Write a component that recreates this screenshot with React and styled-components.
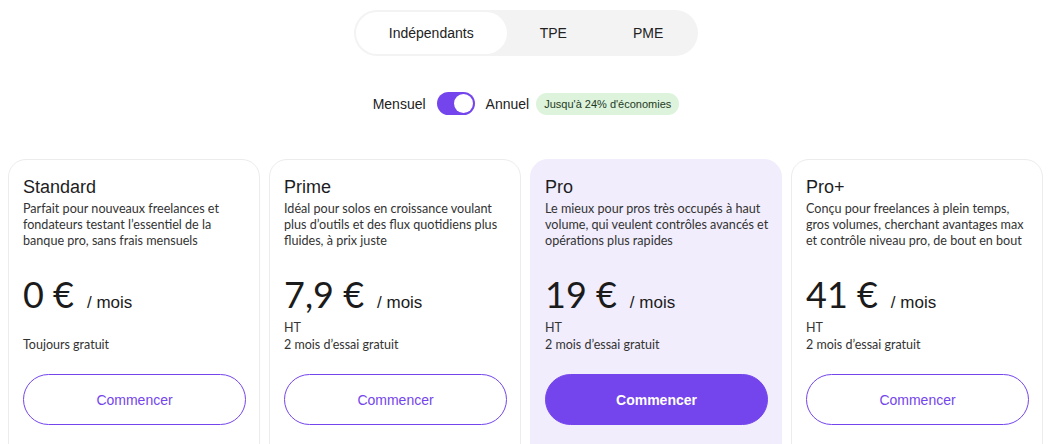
import React, { useState } from 'react';
import styled, { createGlobalStyle, css } from 'styled-components';

const purple = '#7445ec';

const GlobalStyle = createGlobalStyle`
  body {
    margin: 8px;
    background: #ffffff;
    font-family: "Liberation Sans", Arial, sans-serif;
    color: #1d1d1f;
  }
`;

// line breaks kept as in the design
const plans = [
  {
    name: 'Standard',
    text: 'Parfait pour nouveaux freelances et\nfondateurs testant l’essentiel de la\nbanque pro, sans frais mensuels',
    price: '0 €',
    notes: ['\u00a0', 'Toujours gratuit'],
  },
  {
    name: 'Prime',
    text: 'Idéal pour solos en croissance voulant\nplus d’outils et des flux quotidiens plus\nfluides, à prix juste',
    price: '7,9 €',
    notes: ['HT', '2 mois d’essai gratuit'],
  },
  {
    name: 'Pro',
    text: 'Le mieux pour pros très occupés à haut\nvolume, qui veulent contrôles avancés et\nopérations plus rapides',
    price: '19 €',
    notes: ['HT', '2 mois d’essai gratuit'],
    featured: true,
  },
  {
    name: 'Pro+',
    text: 'Conçu pour freelances à plein temps,\ngros volumes, cherchant avantages max\net contrôle niveau pro, de bout en bout',
    price: '41 €',
    notes: ['HT', '2 mois d’essai gratuit'],
  },
];

const Page = styled.div`
  display: flex;
  flex-direction: column;
  align-items: center;
  padding-top: 2px;
`;

const Tabs = styled.div`
  display: flex;
  padding: 2px;
  margin-right: 6px;
  background: #f3f3f3;
  border-radius: 23px;
`;

const Tab = styled.button`
  height: 42px;
  padding: 0 33px;
  border: none;
  border-radius: 21px;
  background: transparent;
  font-family: "Liberation Sans", Arial, sans-serif;
  font-size: 14px;
  color: #222;
  cursor: pointer;
  ${p => p.active && css`
    background: #ffffff;
  `}
`;

const BillingRow = styled.div`
  display: flex;
  align-items: center;
  gap: 11px;
  margin-top: 36px;
  margin-right: 6px;
  font-size: 14px;
  color: #222;
`;

const Switch = styled.button`
  position: relative;
  width: 38px;
  height: 23px;
  border: none;
  border-radius: 12px;
  background: ${p => (p.on ? purple : '#d4d4d8')};
  cursor: pointer;
  padding: 0;

  &::after {
    content: '';
    position: absolute;
    top: 2px;
    left: ${p => (p.on ? '17px' : '2px')};
    width: 19px;
    height: 19px;
    border-radius: 50%;
    background: #fff;
  }
`;

const Badge = styled.span`
  display: inline-flex;
  align-items: center;
  height: 22px;
  padding: 0 8px;
  margin-left: -4px;
  border-radius: 11px;
  background: #ddf3dc;
  color: #1f3a1f;
  font-size: 11px;
`;

const Grid = styled.div`
  align-self: stretch;
  display: grid;
  grid-template-columns: repeat(4, 252px);
  gap: 9px;
  margin-top: 44px;
`;

const Card = styled.div`
  height: 300px;
  padding: 15px 13px 0 14px;
  border: 1px solid #ececec;
  border-radius: 18px;
  background: #ffffff;
  ${p => p.featured && css`
    background: #f1edfd;
    border-color: #f1edfd;
  `}
`;

const Title = styled.h3`
  margin: 0;
  font-family: "Liberation Sans", Arial, sans-serif;
  font-size: 18px;
  line-height: 24px;
  font-weight: 400;
  color: #1d1d1f;
`;

const Description = styled.p`
  margin: 2px 0 0;
  height: 48px;
  font-family: Lato, sans-serif;
  font-size: 12.6px;
  line-height: 16px;
  white-space: pre;
  color: #333;
`;

const PriceRow = styled.div`
  display: flex;
  align-items: baseline;
  gap: 13px;
  margin-top: 23px;
  height: 44px;
`;

const Amount = styled.span`
  font-family: Lato, sans-serif;
  font-size: 36px;
  line-height: 44px;
  color: #1b1b1b;
`;

const Period = styled.span`
  font-family: "Liberation Sans", Arial, sans-serif;
  font-size: 17px;
  color: #1b1b1b;
`;

const Notes = styled.div`
  margin-top: 3px;
  font-family: Lato, sans-serif;
  font-size: 12.5px;
  line-height: 17px;
  color: #333;
`;

const CTA = styled.button`
  display: block;
  width: 100%;
  height: 51px;
  margin-top: 21px;
  border-radius: 26px;
  border: 1px solid ${purple};
  background: #ffffff;
  color: ${purple};
  font-family: "Liberation Sans", Arial, sans-serif;
  font-size: 14px;
  cursor: pointer;
  ${p => p.featured && css`
    background: ${purple};
    color: #ffffff;
    font-weight: 700;
  `}
`;

export default function App() {
  const [segment, setSegment] = useState('Indépendants');
  const [yearly, setYearly] = useState(true);

  return (
    <Page>
      <GlobalStyle />
      <Tabs>
        {['Indépendants', 'TPE', 'PME'].map(t => (
          <Tab key={t} active={segment === t} onClick={() => setSegment(t)}>{t}</Tab>
        ))}
      </Tabs>
      <BillingRow>
        <span>Mensuel</span>
        <Switch on={yearly} onClick={() => setYearly(!yearly)} aria-label="Facturation annuelle" />
        <span>Annuel</span>
        <Badge>Jusqu'à 24% d'économies</Badge>
      </BillingRow>
      <Grid>
        {plans.map(plan => (
          <Card key={plan.name} featured={plan.featured}>
            <Title>{plan.name}</Title>
            <Description>{plan.text}</Description>
            <PriceRow>
              <Amount>{plan.price}</Amount>
              <Period>/ mois</Period>
            </PriceRow>
            <Notes>
              {plan.notes.map((n, i) => <div key={i}>{n}</div>)}
            </Notes>
            <CTA featured={plan.featured}>Commencer</CTA>
          </Card>
        ))}
      </Grid>
    </Page>
  );
}
